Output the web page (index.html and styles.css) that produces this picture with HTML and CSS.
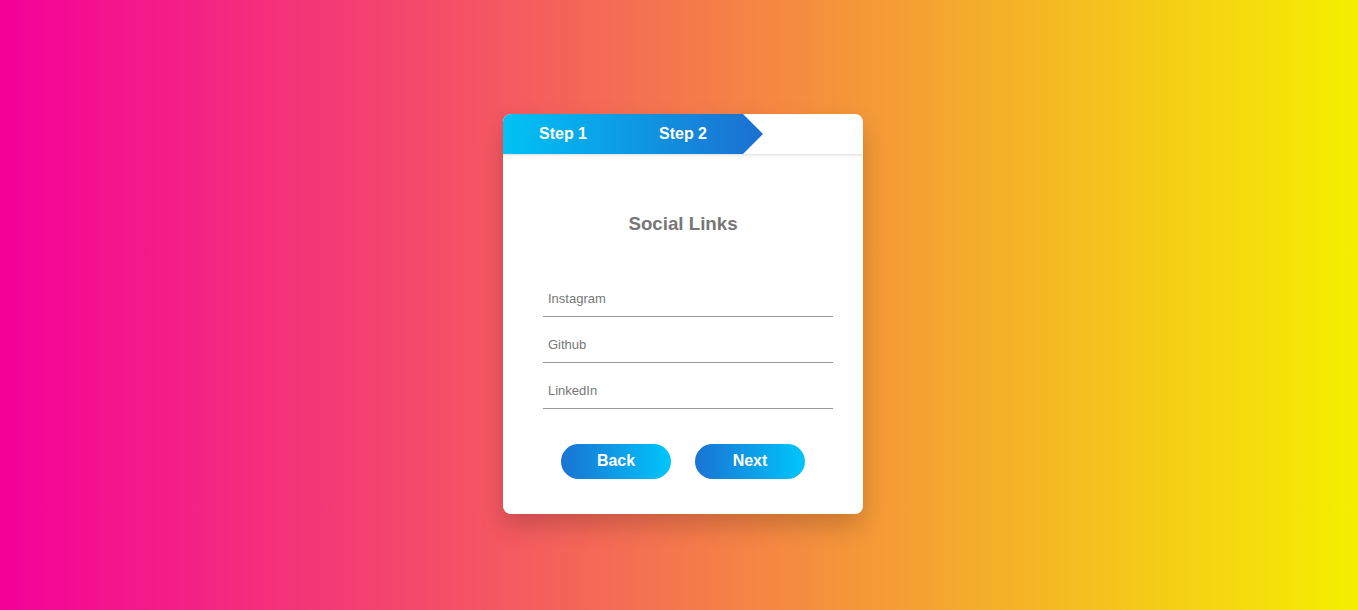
FILE: index.html
```html
<!DOCTYPE html>
<html>
<head>
<meta charset="utf-8">
<link rel="stylesheet" href="styles.css">
</head>
<body>
<div class="page">
  <div class="card">
    <div class="progress">
      <div class="bar">
        <span class="step">Step 1</span>
        <span class="step">Step 2</span>
      </div>
    </div>
    <form class="form">
      <h2 class="title">Social Links</h2>
      <div class="fields">
        <input class="field" type="text" placeholder="Instagram">
        <input class="field" type="text" placeholder="Github">
        <input class="field" type="text" placeholder="LinkedIn">
      </div>
      <div class="actions">
        <button type="button" class="btn">Back</button>
        <button type="button" class="btn">Next</button>
      </div>
    </form>
  </div>
</div>
</body>
</html>
```
FILE: styles.css
```css
* { box-sizing: border-box; }
html, body { margin: 0; height: 100%; }
body {
  font-family: "Liberation Sans", Arial, sans-serif;
  background: linear-gradient(to right, #f4009a, #f5ef00);
}
.page {
  height: 610px;
  display: flex;
  justify-content: center;
  align-items: flex-start;
  padding-top: 114px;
  padding-left: 8px;
}
.card {
  width: 360px;
  height: 400px;
  background: #fff;
  border-radius: 8px;
  box-shadow: 0 12px 24px rgba(0,0,0,0.18);
  overflow: hidden;
}
.progress {
  height: 40px;
  box-shadow: 0 1px 3px rgba(0,0,0,0.15);
  position: relative;
}
.bar {
  width: 260px;
  height: 40px;
  background: linear-gradient(to right, #00c2f4, #1c6fd1);
  clip-path: polygon(0 0, 240px 0, 260px 20px, 240px 40px, 0 40px);
  display: flex;
}
.step {
  width: 120px;
  text-align: center;
  line-height: 40px;
  color: #fff;
  font-weight: bold;
  font-size: 16px;
}
.form {
  padding: 58px 30px 0 40px;
  display: flex;
  flex-direction: column;
}
.title {
  margin: 0;
  text-align: center;
  color: #777;
  font-size: 18.72px;
  font-weight: bold;
  line-height: 24px;
  width: 280px;
}
.fields {
  margin-top: 45px;
  display: flex;
  flex-direction: column;
  gap: 10px;
}
.field {
  width: 290px;
  height: 36px;
  border: none;
  border-bottom: 1px solid #999;
  padding: 0 5px;
  font-family: "Liberation Sans", Arial, sans-serif;
  font-size: 13px;
  color: #555;
  outline: none;
  background: transparent;
}
.field::placeholder { color: #777; }
.actions {
  margin-top: 35px;
  display: flex;
  justify-content: center;
  gap: 24px;
  width: 280px;
}
.btn {
  width: 110px;
  height: 35px;
  padding: 0 0 2px;
  border: none;
  border-radius: 18px;
  background: linear-gradient(to right, #1a73d3, #00c6fb);
  color: #fff;
  font-family: "Liberation Sans", Arial, sans-serif;
  font-weight: bold;
  font-size: 16px;
  cursor: pointer;
}
```
